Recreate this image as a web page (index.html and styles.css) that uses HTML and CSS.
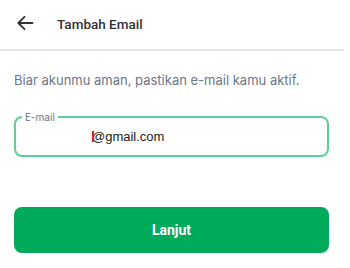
FILE: index.html
```html
<!DOCTYPE html>
<html lang="id">
<head>
<meta charset="utf-8">
<link rel="stylesheet" href="styles.css">
</head>
<body>
<div class="page">
  <header class="header">
    <button class="back" aria-label="Kembali">
      <svg width="18" height="18" viewBox="0 0 18 18"><path d="M16.5 9H2.5M8.5 2.8L2.3 9l6.2 6.2" fill="none" stroke="#31353b" stroke-width="1.8" stroke-linecap="round" stroke-linejoin="round"/></svg>
    </button>
    <h1 class="title">Tambah Email</h1>
  </header>
  <main class="content">
    <p class="hint">Biar akunmu aman, pastikan e-mail kamu aktif.</p>
    <div class="field">
      <span class="label">E-mail</span>
      <div class="value"><span class="caret"></span>@gmail.com</div>
    </div>
    <button class="submit">Lanjut</button>
  </main>
</div>
</body>
</html>
```
FILE: styles.css
```css
* { box-sizing: border-box; }
html, body { margin: 0; background: #fff; }
body { font-family: Inter, "Open Sans", sans-serif; }
.page { width: 344px; }
.header {
  height: 51px;
  display: flex;
  align-items: center;
  padding: 0 0 3px 16px;
  border-bottom: 2px solid #e3e4e6;
}
.back {
  border: 0; background: none; padding: 0; margin: 0;
  width: 18px; height: 18px; display: flex;
}
.title {
  margin: 2px 0 0 23px;
  font-family: Roboto, sans-serif;
  font-size: 13.5px;
  font-weight: 500;
  color: #2e3137;
}
.content { padding: 0 15px 0 14px; display: flex; flex-direction: column; }
.hint {
  margin: 20px 0 0;
  font-size: 13px;
  line-height: 18px;
  color: #6d7588;
}
.field {
  margin-top: 27px;
  height: 41px;
  border: 2px solid #5ccf95;
  border-radius: 8px;
  padding: 0 0 0 76px;
  display: flex;
  align-items: center;
  position: relative;
}
.label {
  position: absolute;
  left: 6px; top: -7px;
  padding: 0 3px;
  background: #fff;
  font-size: 10px;
  line-height: 12px;
  color: #6d7588;
}
.value {
  font-family: "Liberation Sans", Arial, sans-serif;
  font-size: 13px;
  color: #212121;
  line-height: 18px;
  position: relative;
}
.caret {
  position: absolute;
  left: 0; top: 3px;
  width: 2px; height: 11px;
  background: #e02020;
}
.submit {
  margin-top: 50px;
  height: 46px;
  border: 0;
  border-radius: 8px;
  background: #00aa5b;
  color: #fff;
  font-family: Roboto, sans-serif;
  font-size: 14px;
  font-weight: 700;
}
```
